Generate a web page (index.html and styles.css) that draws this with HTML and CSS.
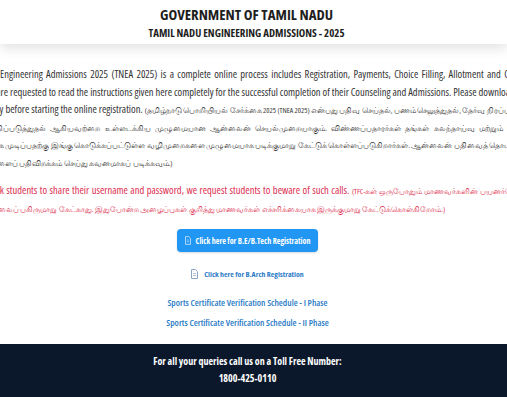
FILE: index.html
```html
<!DOCTYPE html>
<html lang="en">
<head>
    <meta charset="UTF-8">
    <meta name="viewport" content="width=device-width, initial-scale=1.0">
    <title>TNEA 2025</title>
    <link rel="stylesheet" href="styles.css">
</head>
<body>
    <header class="site-header">
        <h1 class="title">GOVERNMENT OF TAMIL NADU</h1>
        <h2 class="subtitle">TAMIL NADU ENGINEERING ADMISSIONS - 2025</h2>
    </header>

    <main class="content">
        <div class="intro">
            <div class="line">Tamil Nadu Engineering Admissions 2025 (TNEA 2025) is a complete online process includes Registration, Payments, Choice Filling, Allotment and Confirmation.</div>
            <div class="line">Candidates are requested to read the instructions given here completely for the successful completion of their Counseling and Admissions. Please download the instructions and</div>
            <div class="line">read carefully before starting the online registration. <span class="ta">(தமிழ்நாடு பொறியியல் சேர்க்கை 2025 (TNEA 2025) என்பது பதிவு செய்தல், பணம் செலுத்துதல், தேர்வு நிரப்புதல், ஒதுக்கீடு</span></div>
            <div class="line ta">மற்றும் உறுதிப்படுத்துதல் ஆகியவற்றை உள்ளடக்கிய முழுமையான ஆன்லைன் செயல்முறையாகும். விண்ணப்பதாரர்கள் தங்கள் கலந்தாய்வு மற்றும் சேர்க்கையை</div>
            <div class="line ta">வெற்றிகரமாக முடிப்பதற்கு இங்கு கொடுக்கப்பட்டுள்ள வழிமுறைகளை முழுமையாக படிக்குமாறு கேட்டுக் கொள்ளப்படுகிறார்கள். ஆன்லைன் பதிவைத் தொடங்குவதற்கு முன்</div>
            <div class="line last ta">வழிமுறைகளைப் பதிவிறக்கம் செய்து கவனமாகப் படிக்கவும்.)</div>
        </div>

        <div class="intro warning">
            <div class="line">TFC never ask students to share their username and password, we request students to beware of such calls. <span class="ta">(TFC-கள் ஒருபோதும் மாணவர்களின் பயனர்பெயர் மற்றும்</span></div>
            <div class="line last ta">கடவுச்சொல்லைப் பகிருமாறு கேட்காது. இதுபோன்ற அழைப்புகள் குறித்து மாணவர்கள் எச்சரிக்கையாக இருக்குமாறு கேட்டுக்கொள்கிறோம்.)</div>
        </div>

        <div class="links">
            <a href="#" class="btn-primary">
                <svg class="doc-icon" viewBox="0 0 7 10" width="6" height="9"><path d="M.5 .5h4l2 2v7h-6z" fill="none" stroke="currentColor" stroke-width="1"/><path d="M2 4.5h3M2 6.5h3" stroke="currentColor" stroke-width=".7"/></svg>
                Click here for B.E/B.Tech Registration
            </a>
            <a href="#" class="link-arch">
                <svg class="doc-icon" viewBox="0 0 7 10" width="7" height="10"><path d="M.5 .5h4l2 2v7h-6z" fill="none" stroke="currentColor" stroke-width="1"/><path d="M2 4.5h3M2 6.5h3" stroke="currentColor" stroke-width=".7"/></svg>
                Click here for B.Arch Registration
            </a>
            <a href="#" class="link-plain">Sports Certificate Verification Schedule - I Phase</a>
            <a href="#" class="link-plain">Sports Certificate Verification Schedule - II Phase</a>
        </div>
    </main>

    <footer class="site-footer">
        <p>For all your queries call us on a Toll Free Number:</p>
        <p>1800-425-0110</p>
    </footer>
</body>
</html>
```

FILE: styles.css
```css
body {
    margin: 0;
    font-family: "Open Sans", "Noto Sans", sans-serif;
    font-stretch: 75%;
    background: #fff;
    color: #333;
    overflow: hidden;
}
.site-header {
    background: #fff;
    height: 44px;
    padding: 5px 14px 0 0;
    box-sizing: border-box;
    display: flex;
    flex-direction: column;
    align-items: center;
    box-shadow: 0 4px 12px rgba(0, 0, 0, 0.12);
    position: relative;
}
.title {
    margin: 0;
    font-size: 14.8px;
    font-weight: 700;
    color: #1e1e1e;
    line-height: 18px;
}
.subtitle {
    margin: 3px 0 0;
    font-size: 10.9px;
    font-weight: 700;
    color: #1e1e1e;
    line-height: 14px;
}
.content {
    height: 300px;
    padding-top: 22px;
    box-sizing: border-box;
}
.intro {
    margin-left: -46px;
    width: 600px;
    font-size: 10.5px;
    line-height: 17.5px;
    text-align: justify;
}
.line {
    white-space: nowrap;
    text-align-last: justify;
}
.line.last {
    text-align-last: left;
}
.ta {
    font-size: 7.6px;
}
.warning {
    margin-top: 10px;
    color: #dc2d4e;
}
.links {
    display: flex;
    flex-direction: column;
    align-items: center;
    margin-top: 11px;
    padding-right: 12px;
}
.btn-primary {
    display: flex;
    align-items: center;
    justify-content: center;
    gap: 5px;
    width: 141px;
    height: 23px;
    background: #2196f3;
    color: #fff;
    border-radius: 4px;
    text-decoration: none;
    font-size: 8px;
    font-weight: 700;
    box-shadow: 0 1px 2px rgba(0, 0, 0, 0.15);
}
.btn-primary .doc-icon {
    opacity: 0.75;
}
.link-arch {
    display: flex;
    align-items: center;
    gap: 6px;
    margin-top: 16px;
    line-height: 12px;
    color: #2a7ac6;
    text-decoration: none;
    font-size: 7.8px;
    font-weight: 700;
}
.link-arch .doc-icon {
    color: #8aa6c4;
}
.link-plain {
    margin-top: 16px;
    line-height: 14px;
    color: #2a7ac6;
    text-decoration: none;
    font-size: 9.2px;
    font-weight: 600;
}
.link-plain + .link-plain {
    margin-top: 6px;
}
.site-footer {
    background: #0b182b;
    color: #fff;
    height: 53px;
    padding: 8.5px 12px 0 0;
    box-sizing: border-box;
    text-align: center;
    font-size: 10px;
    font-weight: 700;
}
.site-footer p {
    margin: 0;
    line-height: 17px;
}
```
